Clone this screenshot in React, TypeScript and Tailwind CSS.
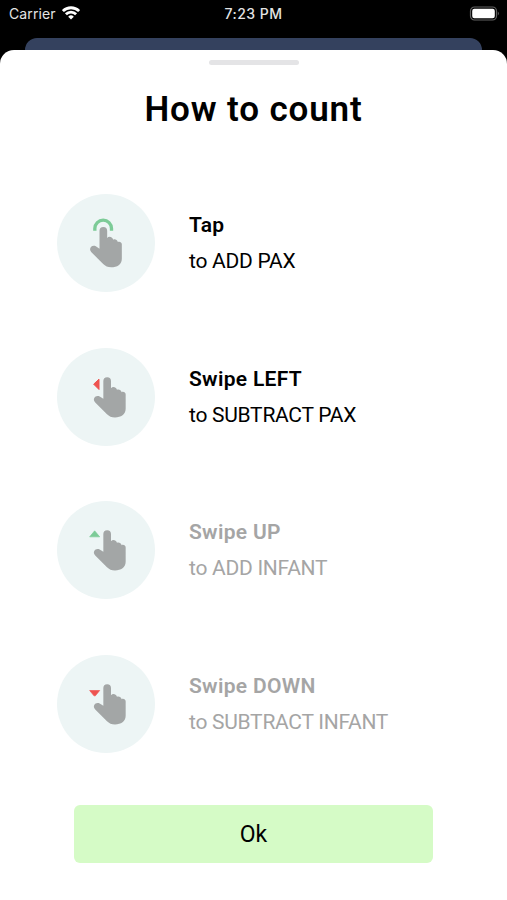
interface Gesture {
  id: string;
  title: string;
  description: string;
  muted: boolean;
}

const gestures: Gesture[] = [
  { id: 'tap', title: 'Tap', description: 'to ADD PAX', muted: false },
  { id: 'left', title: 'Swipe LEFT', description: 'to SUBTRACT PAX', muted: false },
  { id: 'up', title: 'Swipe UP', description: 'to ADD INFANT', muted: true },
  { id: 'down', title: 'Swipe DOWN', description: 'to SUBTRACT INFANT', muted: true },
];

function GestureIcon({ id }: { id: string }) {
  return (
    <svg viewBox="21 22.5 294 294" className="size-[98px]">
      {id === 'tap' && (
        <path d="M134.5 133v-7a25 25 0 0 1 50 0v7" fill="none" stroke="#7ccb97" strokeWidth="10" />
      )}
      {id === 'left' && <path d="M131 131L147 116V147Z" fill="#ee5350" stroke="#ee5350" strokeWidth="3" strokeLinejoin="round" />}
      {id === 'up' && <path d="M119 130L134 112L149 130Z" fill="#7ccb97" stroke="#7ccb97" strokeWidth="2" strokeLinejoin="round" />}
      {id === 'down' && <path d="M119 129H149L136 145H132Z" fill="#ee5350" stroke="#ee5350" strokeWidth="2" strokeLinejoin="round" />}
      <path
        transform={id === 'tap' ? 'translate(-11.5 11.5)' : undefined}
        d="M160 121.500a11.500 11.500 0 0 1 23 0V143C188 137 198 139 201 148C206 145 213 148 215 155C220 152 227 156 227 162V205C227 222 213 231 195 231C185 231 177 227 171 221L135 185C126 175 137 162 149 168L160 175Z"
        fill="#a3a6a6"
      />
    </svg>
  );
}

function StatusBar() {
  return (
    <div className="grid h-[38px] grid-cols-3 px-[9px] pt-1 font-['Inter','Liberation_Sans',sans-serif] text-[14px] leading-5 text-[#e4e4e4]">
      <div className="flex gap-[6px]">
        <span className="tracking-[0.1px]">Carrier</span>
        <svg viewBox="0 0 18 14" className="mt-[2px] h-[14px] w-[18px]" fill="none" stroke="white" strokeWidth="2.800">
          <path d="M.9 5.100a11.500 11.500 0 0 1 16.200 0M3.900 8.300a7.200 7.200 0 0 1 10.200 0" />
          <path d="M9 13.500L6.200 10.700a4 4 0 0 1 5.600 0Z" fill="white" stroke="none" />
        </svg>
      </div>
      <span className="text-center font-medium tracking-[0.5px] whitespace-nowrap">7:23 PM</span>
      <div className="flex justify-end">
        <svg viewBox="0 0 31 15" className="-mr-[2px] mt-[1.500px] h-[15px] w-[31px]">
          <rect x="1.500" y="1" width="26" height="13" rx="4" fill="none" stroke="#626262" strokeWidth="1.200" />
          <rect x="3.200" y="2.800" width="22.600" height="9.400" rx="2.200" fill="white" />
          <path d="M28.800 5.500q2.200 2 0 4Z" fill="#626262" />
        </svg>
      </div>
    </div>
  );
}

export default function App() {
  return (
    <div className="flex h-[900px] w-[507px] flex-col overflow-hidden bg-black font-['Roboto','Liberation_Sans',sans-serif] text-black">
      <StatusBar />
      {/* Edge of the screen behind the sheet */}
      <div className="mx-[25px] h-3 shrink-0 rounded-t-[12px] bg-[#34415e]" />

      <div className="flex flex-1 flex-col items-center rounded-t-[14px] bg-white pt-[9.500px]">
        <div className="h-[5px] w-[90px] rounded-full bg-[#e4e4e6]" />
        <h1 className="mt-[23.500px] text-[35px] leading-[44px] font-semibold tracking-[0.85px]">How to count</h1>

        <div className="mt-[62px] flex w-full flex-col gap-[55.500px] pl-[57px]">
          {gestures.map((gesture) => (
            <div key={gesture.id} className={`flex h-[98px] items-center gap-[34px] text-[21px] leading-7 ${gesture.muted ? 'text-[#a5a5a5]' : 'text-black'}`}>
              <div className="size-[98px] shrink-0 rounded-full bg-[#edf5f5]">
                <GestureIcon id={gesture.id} />
              </div>
              <div className="flex flex-col gap-2">
                <h2 className="self-start font-semibold tracking-[0.3px]">{gesture.title}</h2>
                <p className="self-start tracking-[-0.27px]">{gesture.description}</p>
              </div>
            </div>
          ))}
        </div>

        <button className="mt-[52.500px] h-[58px] w-[359px] rounded-[6px] bg-[#d5fbc6] pt-[2px] text-[23px]">Ok</button>
      </div>
    </div>
  );
}
